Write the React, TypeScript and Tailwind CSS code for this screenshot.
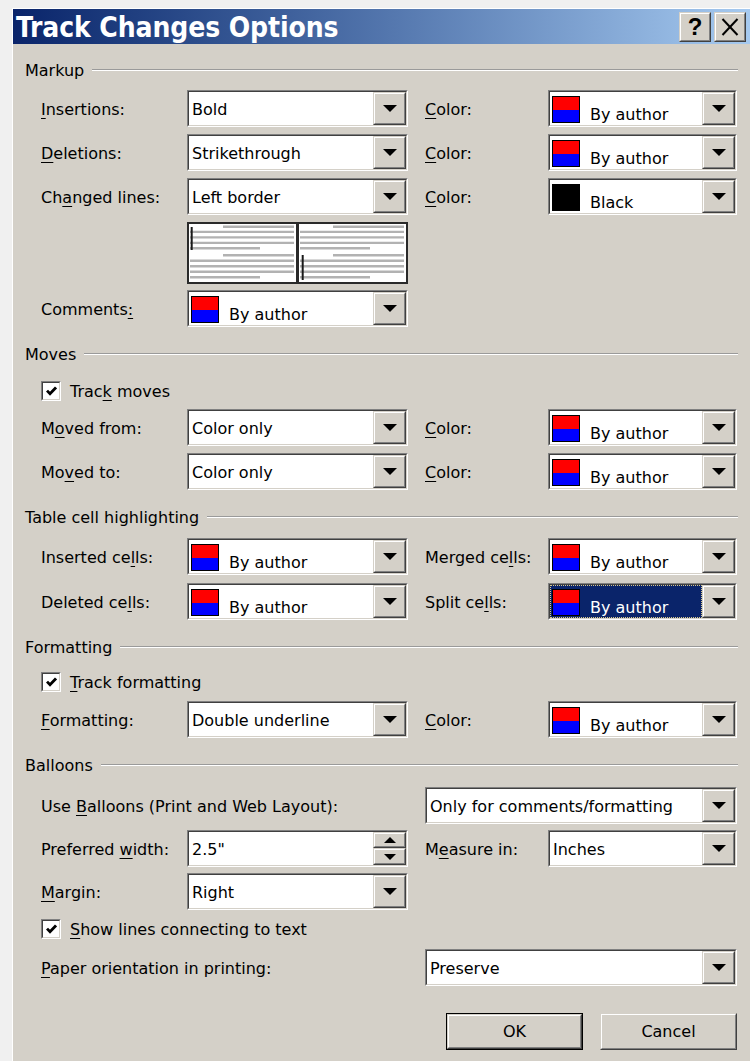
import React from "react";

type Kids = { children?: React.ReactNode };

// underlined access key
const U = ({ children }: Kids) => (
  <span className="underline decoration-1 underline-offset-[3px]">{children}</span>
);

function Arrow({ up = false }: { up?: boolean }) {
  return up ? (
    <svg width="12" height="6" viewBox="0 0 12 6">
      <polygon points="0,6 12,6 6,0" fill="#000" />
    </svg>
  ) : (
    <svg width="14" height="7" viewBox="0 0 14 7">
      <polygon points="0,0 14,0 7,7" fill="#000" />
    </svg>
  );
}

function RaisedBox({ className = "", children }: Kids & { className?: string }) {
  return (
    <div
      className={`border border-t-[#d4d0c8] border-l-[#d4d0c8] border-b-[#404040] border-r-[#404040] ${className}`}
    >
      <div className="w-full h-full border border-t-white border-l-white border-b-[#808080] border-r-[#808080] bg-[#d4d0c8] flex items-center justify-center">
        {children}
      </div>
    </div>
  );
}

function DropButton() {
  return (
    <RaisedBox className="w-[33px] h-full">
      <Arrow />
    </RaisedBox>
  );
}

function Field({ width, children }: Kids & { width: string }) {
  return (
    <div
      className={`${width} h-[37px] shrink-0 border border-t-[#808080] border-l-[#808080] border-b-white border-r-white`}
    >
      <div className="w-full h-full border border-t-[#404040] border-l-[#404040] border-b-[#d4d0c8] border-r-[#d4d0c8] bg-white flex">
        {children}
      </div>
    </div>
  );
}

function Combo({ width, value }: { width: string; value: string }) {
  return (
    <Field width={width}>
      <div className="flex-1 flex items-center pl-[3px] pt-[2px] whitespace-nowrap">{value}</div>
      <DropButton />
    </Field>
  );
}

function Swatch({ black = false }: { black?: boolean }) {
  return (
    <div className="w-[28px] h-[27px] border border-black flex flex-col shrink-0">
      <div className={`flex-1 ${black ? "bg-black" : "bg-[#ff0000]"}`} />
      <div className={`flex-1 ${black ? "bg-black" : "bg-[#0000ff]"}`} />
    </div>
  );
}

function ColorCombo({
  width,
  value = "By author",
  black = false,
  selected = false,
}: {
  width: string;
  value?: string;
  black?: boolean;
  selected?: boolean;
}) {
  return (
    <Field width={width}>
      <div
        className={
          selected
            ? "flex-1 flex items-end pl-[1px] pb-[1px] bg-[#0a246a] text-white border border-dotted border-[#d8c88a]"
            : "flex-1 flex items-end pl-[2px] pb-[2px]"
        }
      >
        <Swatch black={black} />
        <span className="ml-[10px] mb-[-2px] whitespace-nowrap">{value}</span>
      </div>
      <DropButton />
    </Field>
  );
}

function Spinner({ width, value }: { width: string; value: string }) {
  return (
    <Field width={width}>
      <div className="flex-1 flex items-center pl-[3px] pt-[2px]">{value}</div>
      <div className="w-[33px] h-full flex flex-col">
        <RaisedBox className="w-full h-[16px]">
          <Arrow up />
        </RaisedBox>
        <RaisedBox className="w-full h-[17px]">
          <svg width="12" height="6" viewBox="0 0 12 6">
            <polygon points="0,0 12,0 6,6" fill="#000" />
          </svg>
        </RaisedBox>
      </div>
    </Field>
  );
}

function CheckBox() {
  return (
    <div className="w-[20px] h-[20px] shrink-0 border border-t-[#808080] border-l-[#808080] border-b-white border-r-white">
      <div className="w-full h-full border border-t-[#404040] border-l-[#404040] border-b-[#d4d0c8] border-r-[#d4d0c8] bg-white flex items-center justify-center">
        <svg width="11" height="10" viewBox="0 0 11 10">
          <polyline points="1,4.6 4,7.8 10,1.4" fill="none" stroke="#000" strokeWidth="2.8" />
        </svg>
      </div>
    </div>
  );
}

function Group({ title, className = "" }: { title: string; className?: string }) {
  return (
    <div className={`flex items-center h-[20px] ${className}`}>
      <span className="whitespace-nowrap pt-[2px]">{title}</span>
      <div className="flex-1 ml-[8px] border-t border-t-[#9a9a9a] border-b border-b-white" />
    </div>
  );
}

function Row({ className = "", children }: Kids & { className?: string }) {
  return <div className={`flex items-center pl-[16px] ${className}`}>{children}</div>;
}

const LeftLabel = ({ children }: Kids) => (
  <div className="w-[146px] shrink-0 whitespace-nowrap pt-[2px]">{children}</div>
);
const RightLabel = ({ children }: Kids) => (
  <div className="w-[123px] ml-[17px] shrink-0 whitespace-nowrap pt-[2px]">{children}</div>
);

// small page sketch showing where the change bar sits
function PageSketch({ barTop, barBottom, barX }: { barTop: number; barBottom: number; barX: number }) {
  const ys = [2.7, 7.9, 13.4, 18.9, 24.3, 31.3, 36.7, 42.2, 47.7, 53.2];
  return (
    <svg width="107" height="58" viewBox="0 0 107 58">
      {ys.map((y, i) => {
        const k = i % 5;
        const x1 = k === 0 ? 34 : 1;
        const x2 = k === 4 ? 71 : 105;
        return <line key={i} x1={x1} y1={y} x2={x2} y2={y} stroke="#b2b2b2" strokeWidth="2.4" />;
      })}
      <line x1={barX} y1={barTop} x2={barX} y2={barBottom} stroke="#1a1a1a" strokeWidth="2" />
    </svg>
  );
}

function TitleButton({ children }: Kids) {
  return <RaisedBox className="w-[32px] h-[30px]">{children}</RaisedBox>;
}

export default function App() {
  return (
    <div className="w-[750px] h-[1061px] overflow-hidden bg-[#f0f0f0] pl-[12px] pt-[8px] font-['DejaVu_Sans',sans-serif] text-[16px] leading-[20px] text-black">
      <div className="w-[738px] h-[1053px] border-t border-l border-white bg-[#d4d0c8] flex flex-col">
        {/* caption */}
        <div className="h-[35px] shrink-0 flex items-center bg-linear-to-r from-[#0a246a] to-[#a6caf0] pl-[3px] pr-[4px]">
          <div className="flex-1 text-white font-bold text-[28px] leading-[32px] pt-[2px] font-stretch-condensed font-['DejaVu_Sans_Condensed','DejaVu_Sans',sans-serif] tracking-[-0.1px]">
            Track Changes Options
          </div>
          <div className="flex gap-[3px]">
            <TitleButton>
              <span className="font-bold text-[24px] leading-[24px] font-['Liberation_Sans',sans-serif]">?</span>
            </TitleButton>
            <TitleButton>
              <svg width="18" height="18" viewBox="0 0 18 18">
                <line x1="1.5" y1="1" x2="16.5" y2="17" stroke="#000" strokeWidth="2" />
                <line x1="16.5" y1="1" x2="1.5" y2="17" stroke="#000" strokeWidth="2" />
              </svg>
            </TitleButton>
          </div>
        </div>

        <div className="flex flex-col pl-[12px] pr-[12px]">
          <Group title="Markup" className="mt-[16px]" />
          <Row className="mt-[10px]">
            <LeftLabel><U>I</U>nsertions:</LeftLabel>
            <Combo width="w-[221px]" value="Bold" />
            <RightLabel><U>C</U>olor:</RightLabel>
            <ColorCombo width="w-[189px]" />
          </Row>
          <Row className="mt-[7px]">
            <LeftLabel><U>D</U>eletions:</LeftLabel>
            <Combo width="w-[221px]" value="Strikethrough" />
            <RightLabel><U>C</U>olor:</RightLabel>
            <ColorCombo width="w-[189px]" />
          </Row>
          <Row className="mt-[7px]">
            <LeftLabel>Ch<U>a</U>nged lines:</LeftLabel>
            <Combo width="w-[221px]" value="Left border" />
            <RightLabel><U>C</U>olor:</RightLabel>
            <ColorCombo width="w-[189px]" value="Black" black />
          </Row>
          <Row className="mt-[7px]">
            <div className="w-[146px] shrink-0" />
            <div className="w-[221px] h-[62px] border-2 border-[#2a2a2a] flex bg-white">
              <div className="flex-1">
                <PageSketch barX={2.7} barTop={3} barBottom={26} />
              </div>
              <div className="w-[3px] bg-[#2a2a2a]" />
              <div className="flex-1">
                <PageSketch barX={3.7} barTop={31} barBottom={56} />
              </div>
            </div>
          </Row>
          <Row className="mt-[6px]">
            <LeftLabel>Comments<U>:</U></LeftLabel>
            <ColorCombo width="w-[221px]" />
          </Row>

          <Group title="Moves" className="mt-[17px]" />
          <Row className="mt-[17px] h-[20px]">
            <CheckBox />
            <span className="ml-[9px] pt-[2px]">Trac<U>k</U> moves</span>
          </Row>
          <Row className="mt-[8px]">
            <LeftLabel>M<U>o</U>ved from:</LeftLabel>
            <Combo width="w-[221px]" value="Color only" />
            <RightLabel><U>C</U>olor:</RightLabel>
            <ColorCombo width="w-[189px]" />
          </Row>
          <Row className="mt-[7px]">
            <LeftLabel>Mo<U>v</U>ed to:</LeftLabel>
            <Combo width="w-[221px]" value="Color only" />
            <RightLabel><U>C</U>olor:</RightLabel>
            <ColorCombo width="w-[189px]" />
          </Row>

          <Group title="Table cell highlighting" className="mt-[17px]" />
          <Row className="mt-[11px]">
            <LeftLabel>Inserted ce<U>l</U>ls:</LeftLabel>
            <ColorCombo width="w-[221px]" />
            <RightLabel>Merged ce<U>l</U>ls:</RightLabel>
            <ColorCombo width="w-[189px]" />
          </Row>
          <Row className="mt-[8px]">
            <LeftLabel>Deleted ce<U>l</U>ls:</LeftLabel>
            <ColorCombo width="w-[221px]" />
            <RightLabel>Split ce<U>l</U>ls:</RightLabel>
            <ColorCombo width="w-[189px]" selected />
          </Row>

          <Group title="Formatting" className="mt-[17px]" />
          <Row className="mt-[15px] h-[20px]">
            <CheckBox />
            <span className="ml-[9px] pt-[2px]"><U>T</U>rack formatting</span>
          </Row>
          <Row className="mt-[9px]">
            <LeftLabel><U>F</U>ormatting:</LeftLabel>
            <Combo width="w-[221px]" value="Double underline" />
            <RightLabel><U>C</U>olor:</RightLabel>
            <ColorCombo width="w-[189px]" />
          </Row>

          <Group title="Balloons" className="mt-[17px]" />
          <Row className="mt-[12px]">
            <div className="w-[384px] shrink-0 whitespace-nowrap pt-[2px]">
              Use <U>B</U>alloons (Print and Web Layout):
            </div>
            <Combo width="w-[312px]" value="Only for comments/formatting" />
          </Row>
          <Row className="mt-[6px]">
            <LeftLabel>Preferred <U>w</U>idth:</LeftLabel>
            <Spinner width="w-[221px]" value={'2.5"'} />
            <RightLabel>M<U>e</U>asure in:</RightLabel>
            <Combo width="w-[189px]" value="Inches" />
          </Row>
          <Row className="mt-[6px]">
            <LeftLabel><U>M</U>argin:</LeftLabel>
            <Combo width="w-[221px]" value="Right" />
          </Row>
          <Row className="mt-[9px] h-[20px]">
            <CheckBox />
            <span className="ml-[9px] pt-[2px]"><U>S</U>how lines connecting to text</span>
          </Row>
          <Row className="mt-[10px]">
            <div className="w-[384px] shrink-0 whitespace-nowrap pt-[2px]">
              <U>P</U>aper orientation in printing:
            </div>
            <Combo width="w-[312px]" value="Preserve" />
          </Row>

          <div className="mt-[27px] flex justify-end gap-[17px] mr-[1px]">
            <div className="w-[137px] h-[37px] border border-black">
              <RaisedBox className="w-full h-full">OK</RaisedBox>
            </div>
            <RaisedBox className="w-[137px] h-[37px]">Cancel</RaisedBox>
          </div>
        </div>
      </div>
    </div>
  );
}
